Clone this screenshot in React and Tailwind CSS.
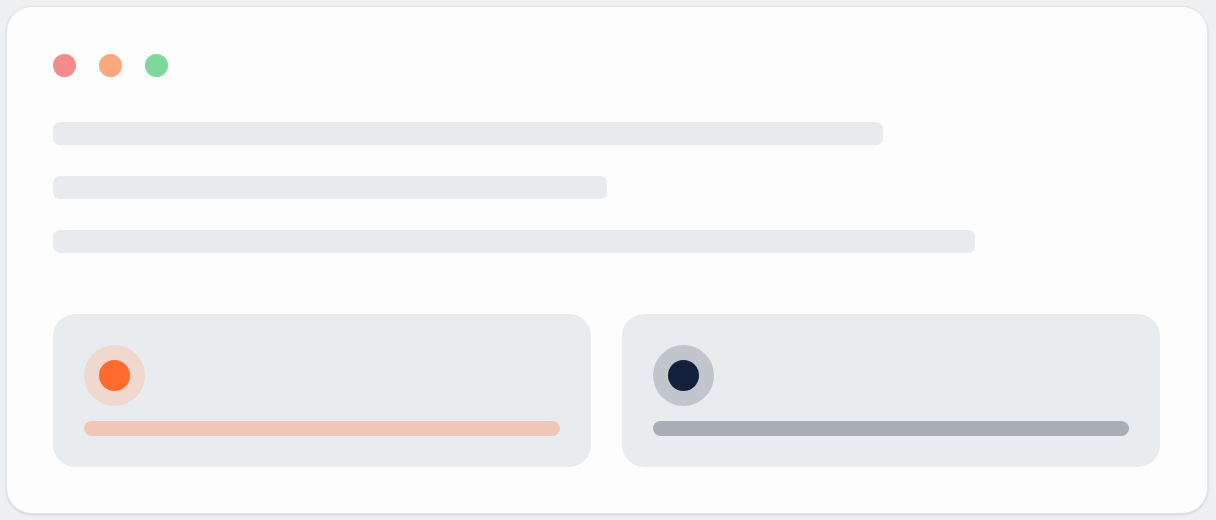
import React from 'react';

function Stat({ ring, dot, bar }) {
  return (
    <div className="flex-1 rounded-[22px] bg-[#e9ecef] px-[31px] pt-[31px] h-[153px]">
      <div className={`w-[61px] h-[61px] rounded-full flex items-center justify-center ${ring}`}>
        <div className={`w-[31px] h-[31px] rounded-full ${dot}`} />
      </div>
      <div className={`mt-[15px] h-[15px] rounded-full ${bar}`} />
    </div>
  );
}

export default function App() {
  return (
    <div className="w-[1216px] h-[520px] bg-[#eef0f2] pt-[6px] pl-[6px]">
      <div className="w-[1202px] h-[508px] rounded-[26px] bg-[#fdfdfd] border border-[#e3e6ea] shadow-sm pl-[46px] pr-[47px] pt-[47px]">
        <div className="flex gap-[23px]">
          <span className="w-[23px] h-[23px] rounded-full bg-[#f38a8b]" />
          <span className="w-[23px] h-[23px] rounded-full bg-[#fda77d]" />
          <span className="w-[23px] h-[23px] rounded-full bg-[#7dd89b]" />
        </div>

        <div className="mt-[45px] flex flex-col gap-[31px]">
          <div className="h-[23px] w-[830px] rounded-[7px] bg-[#e8ebee]" />
          <div className="h-[23px] w-[554px] rounded-[7px] bg-[#e8ebee]" />
          <div className="h-[23px] w-[922px] rounded-[7px] bg-[#e8ebee]" />
        </div>

        <div className="mt-[61px] flex gap-[31px]">
          <Stat ring="bg-[#f0d8ce]" dot="bg-[#ff6b2c]" bar="bg-[#f0c6b6]" />
          <Stat ring="bg-[#c1c6cc]" dot="bg-[#13203b]" bar="bg-[#a8aeb5]" />
        </div>
      </div>
    </div>
  );
}
